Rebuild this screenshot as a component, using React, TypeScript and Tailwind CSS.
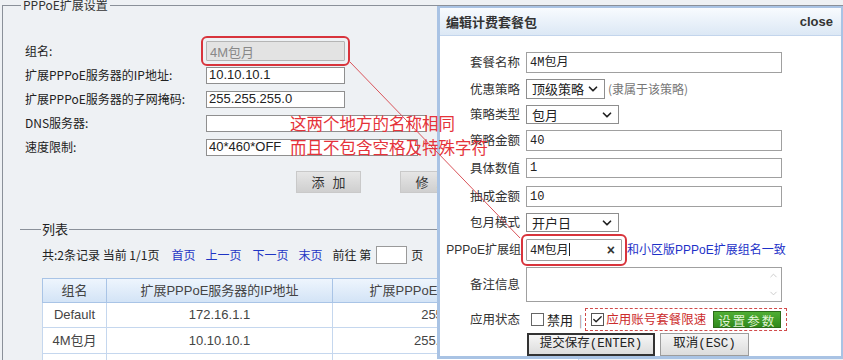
import { ChevronDown, ChevronUp, Check } from 'lucide-react';

const sans = "font-['Liberation_Sans','Noto_Sans_CJK_SC',sans-serif]";
const mono = "font-['Liberation_Mono','Noto_Sans_CJK_SC',monospace]";

function LeftRow({ label, children }: { label: string; children: React.ReactNode }) {
  return (
    <div className="flex h-[24px] items-center">
      <span className="w-[181px] text-[12px] text-[#222]">{label}</span>
      {children}
    </div>
  );
}

function FakeSelect({ value, width }: { value: string; width: string }) {
  return (
    <div className={`flex h-full items-center justify-between border border-[#8e8e8e] bg-white pl-[5px] pr-[4px] text-[13px] text-[#222] ${width}`}>
      <span>{value}</span>
      <ChevronDown className="h-[14px] w-[14px] text-[#222]" strokeWidth={3} />
    </div>
  );
}

function Label({ children }: { children: React.ReactNode }) {
  return <span className="w-[82px] shrink-0 pr-[2px] text-right text-[12.5px] text-[#333]">{children}</span>;
}

function GrayButton({ a, b }: { a: string; b: string }) {
  return (
    <button className="flex h-[22px] w-[65px] items-center justify-center gap-[8px] border border-[#c9c9c9] bg-linear-to-b from-[#e6e6e6] to-[#cfcfcf] text-[13px] text-[#333]">
      <span>{a}</span>
      <span>{b}</span>
    </button>
  );
}

export default function App() {
  return (
    <div className="relative h-[360px] w-[843px] overflow-hidden bg-[#eef1f4] font-['Noto_Sans_CJK_SC',sans-serif] text-[12px] text-[#222]">
      {/* page behind the dialog */}
      <fieldset className="-mt-[1px] ml-[2px] h-[380px] w-[900px] border-l border-t border-[#8a9099]">
        <legend className="ml-[18px] px-[2px] text-[12px] leading-[12px] text-[#333]">PPPoE扩展设置</legend>

        <div className="pl-[22px] pt-[28px]">
          <LeftRow label="组名:">
            <input
              readOnly
              value="4M包月"
              className={`h-[20px] w-[139px] rounded-[1px] border border-[#b5b5b5] bg-[#e3e3e3] px-[3px] text-[13px] text-[#888] outline-2 outline-offset-[3px] outline-[#d8343c] ${sans}`}
            />
          </LeftRow>
          <LeftRow label="扩展PPPoE服务器的IP地址:">
            <input readOnly value="10.10.10.1" className={`h-[17px] w-[139px] border border-[#8f8f8f] bg-white px-[2px] text-[13px] ${sans}`} />
          </LeftRow>
          <LeftRow label="扩展PPPoE服务器的子网掩码:">
            <input readOnly value="255.255.255.0" className={`h-[17px] w-[139px] border border-[#8f8f8f] bg-white px-[2px] text-[13px] ${sans}`} />
          </LeftRow>
          <LeftRow label="DNS服务器:">
            <input readOnly value="" className={`h-[17px] w-[221px] border border-[#8f8f8f] bg-white px-[2px] text-[13px] ${sans}`} />
          </LeftRow>
          <LeftRow label="速度限制:">
            <input readOnly value="40*460*OFF" className={`h-[17px] w-[212px] border border-[#8f8f8f] bg-white px-[2px] text-[13px] ${sans}`} />
          </LeftRow>

          <div className="ml-[271px] mt-[12px] flex gap-[39px]">
            <GrayButton a="添" b="加" />
            <GrayButton a="修" b="改" />
          </div>
        </div>

        <fieldset className="ml-[17px] mt-[29px] border-t border-[#8a9099]">
          <legend className="ml-[21px] px-[1px] text-[13px] leading-[14px] text-[#222]">列表</legend>

          <div className="ml-[22px] mt-[10px] flex h-[18px] items-center text-[12px] text-[#222]">
            <span>共:2条记录 当前 1/1页</span>
            <span className="ml-[12px] text-[#1f35c4]">首页</span>
            <span className="ml-[10px] text-[#1f35c4]">上一页</span>
            <span className="ml-[11px] text-[#1f35c4]">下一页</span>
            <span className="ml-[10px] text-[#1f35c4]">末页</span>
            <span className="ml-[10px]">前往 第</span>
            <input readOnly value="" className="ml-[5px] h-[18px] w-[31px] border border-[#9a9a9a] bg-white" />
            <span className="ml-[4px]">页</span>
          </div>

          <table className={`ml-[22px] mt-[14px] border-collapse text-[13px] text-[#444] ${sans}`}>
            <thead>
              <tr className="h-[24px] bg-linear-to-b from-[#eef5fd] to-[#d2e3f6]">
                <th className="w-[64px] border border-[#a9c4e6] font-normal">组名</th>
                <th className="w-[226px] border border-[#a9c4e6] font-normal">扩展PPPoE服务器的IP地址</th>
                <th className="w-[246px] border border-[#a9c4e6] font-normal">扩展PPPoE服务器的子网掩码</th>
              </tr>
            </thead>
            <tbody className="bg-white">
              <tr className="h-[25px]">
                <td className="border border-[#c5d7ee] text-center">Default</td>
                <td className="border border-[#c5d7ee] text-center">172.16.1.1</td>
                <td className="border border-[#c5d7ee] text-center">255.255.0.0</td>
              </tr>
              <tr className="h-[26px]">
                <td className="border border-[#c5d7ee] text-center">4M包月</td>
                <td className="border border-[#c5d7ee] text-center">10.10.10.1</td>
                <td className="border border-[#c5d7ee] text-center">255.255.255.0</td>
              </tr>
              <tr className="h-[26px]">
                <td className="border border-[#c5d7ee]"></td>
                <td className="border border-[#c5d7ee]"></td>
                <td className="border border-[#c5d7ee]"></td>
              </tr>
            </tbody>
          </table>
        </fieldset>
      </fieldset>

      {/* edit dialog */}
      <div className="absolute left-[437px] top-[6px] z-10 flex h-[353px] w-[406px] flex-col border-[3px] border-r-2 border-t-2 border-[#a9c3e4] bg-white">
        <div className="flex h-[28px] shrink-0 items-center justify-between border-b border-[#c3d5ec] bg-linear-to-b from-[#f8fbfe] to-[#dce8f5] pl-[6px] pr-[8px]">
          <span className="text-[13px] font-bold text-[#333]">编辑计费套餐包</span>
          <span className={`text-[13px] font-bold text-[#333] ${sans}`}>close</span>
        </div>

        <div className="flex flex-col pt-[16px]">
          <div className="flex h-[21px] items-center">
            <Label>套餐名称</Label>
            <div className={`ml-[4px] flex h-full w-[256px] items-center border border-[#a0a0a0] px-[3px] text-[12px] ${mono}`}>4M包月</div>
          </div>

          <div className="mt-[6px] flex h-[20px] items-center">
            <Label>优惠策略</Label>
            <div className="ml-[4px] h-full"><FakeSelect value="顶级策略" width="w-[79px]" /></div>
            <span className="ml-[3px] text-[12px] text-[#777]">(隶属于该策略)</span>
          </div>

          <div className="mt-[6px] flex h-[19px] items-center">
            <Label>策略类型</Label>
            <div className="ml-[4px] h-full"><FakeSelect value="包月" width="w-[93px]" /></div>
          </div>

          <div className="mt-[6px] flex h-[21px] items-center">
            <Label>策略金额</Label>
            <div className={`ml-[4px] flex h-full w-[256px] items-center border border-[#a0a0a0] px-[3px] text-[12px] ${mono}`}>40</div>
          </div>

          <div className="mt-[7px] flex h-[20px] items-center">
            <Label>具体数值</Label>
            <div className={`ml-[4px] flex h-full w-[256px] items-center border border-[#a0a0a0] px-[3px] text-[12px] ${mono}`}>1</div>
          </div>

          <div className="mt-[8px] flex h-[21px] items-center">
            <Label>抽成金额</Label>
            <div className={`ml-[4px] flex h-full w-[256px] items-center border border-[#a0a0a0] px-[3px] text-[12px] ${mono}`}>10</div>
          </div>

          <div className="mt-[6px] flex h-[19px] items-center">
            <Label>包月模式</Label>
            <div className="ml-[4px] h-full"><FakeSelect value="开户日" width="w-[93px]" /></div>
          </div>

          <div className="mt-[7px] flex h-[22px] items-center">
            <span className={`w-[82px] shrink-0 pr-[1px] text-right text-[12px] text-[#333] ${sans}`}>PPPoE扩展组</span>
            <div className={`ml-[4px] flex h-full w-[96px] items-center justify-between rounded-[1px] border border-[#a0a0a0] pl-[3px] pr-[6px] text-[12px] outline-2 outline-offset-[3px] outline-[#d8343c] ${mono}`}>
              <span>4M包月<span className="ml-[1px] inline-block h-[13px] w-px translate-y-[2px] bg-[#222]" /></span>
              <span className={`text-[14px] font-bold text-[#333] ${sans}`}>×</span>
            </div>
            <span className={`ml-[5px] text-[12px] text-[#1d31c8] ${sans}`}>和小区版PPPoE扩展组名一致</span>
          </div>

          <div className="mt-[6px] flex h-[35px] items-center">
            <Label>备注信息</Label>
            <div className="ml-[4px] flex h-full w-[256px] flex-col items-end justify-between border border-[#a0a0a0] py-[2px] pr-[2px]">
              <ChevronUp className="h-[11px] w-[11px] text-[#c8c8c8]" strokeWidth={2} />
              <ChevronDown className="h-[11px] w-[11px] text-[#c8c8c8]" strokeWidth={2} />
            </div>
          </div>

          <div className="mt-[6px] flex h-[23px] items-center">
            <Label>应用状态</Label>
            <span className="ml-[9px] h-[13px] w-[13px] border border-[#666] bg-white" />
            <span className="ml-[3px] text-[13px] text-[#222]">禁用</span>
            <span className="ml-[6px] text-[12px] text-[#888]">|</span>
            <div className="ml-[3px] flex h-full w-[202px] items-center border border-dashed border-[#d04a4a] pl-[5px]">
              <span className="flex h-[13px] w-[13px] items-center justify-center border border-[#555] bg-white">
                <Check className="h-[11px] w-[11px] text-[#222]" strokeWidth={3} />
              </span>
              <span className="ml-[2px] text-[12.5px] text-[#cc2b2b]">应用账号套餐限速</span>
              <button className="ml-[7px] h-[17px] w-[68px] border border-[#2b6b19] bg-linear-to-b from-[#4fae34] to-[#2f8a1c] text-[12.5px] tracking-[2px] text-[#e4f5d8]">设置参数</button>
            </div>
          </div>

          <div className="mt-[2px] flex h-[23px] items-center">
            <span className="w-[82px] shrink-0" />
            <button className={`ml-[5px] h-full w-[128px] border-2 border-[#333] bg-linear-to-b from-[#f6f6f6] to-[#dcdcdc] text-[12.5px] text-[#222] ${mono}`}>提交保存(ENTER)</button>
            <button className={`ml-[5px] h-full w-[89px] border border-[#9c9c9c] bg-linear-to-b from-[#f6f6f6] to-[#dcdcdc] text-[12.5px] text-[#222] ${mono}`}>取消(ESC)</button>
          </div>
        </div>
      </div>

      {/* annotation */}
      <svg className="pointer-events-none absolute inset-0 z-20" width="843" height="360">
        <line x1="350" y1="62" x2="520" y2="238" stroke="#d9545a" strokeWidth="1" />
      </svg>
      <div className="pointer-events-none absolute left-[290px] top-[114px] z-20 flex flex-col gap-[6px] text-[16.5px] leading-[18px] text-[#e5333a]">
        <span>这两个地方的名称相同</span>
        <span>而且不包含空格及特殊字符</span>
      </div>
    </div>
  );
}
